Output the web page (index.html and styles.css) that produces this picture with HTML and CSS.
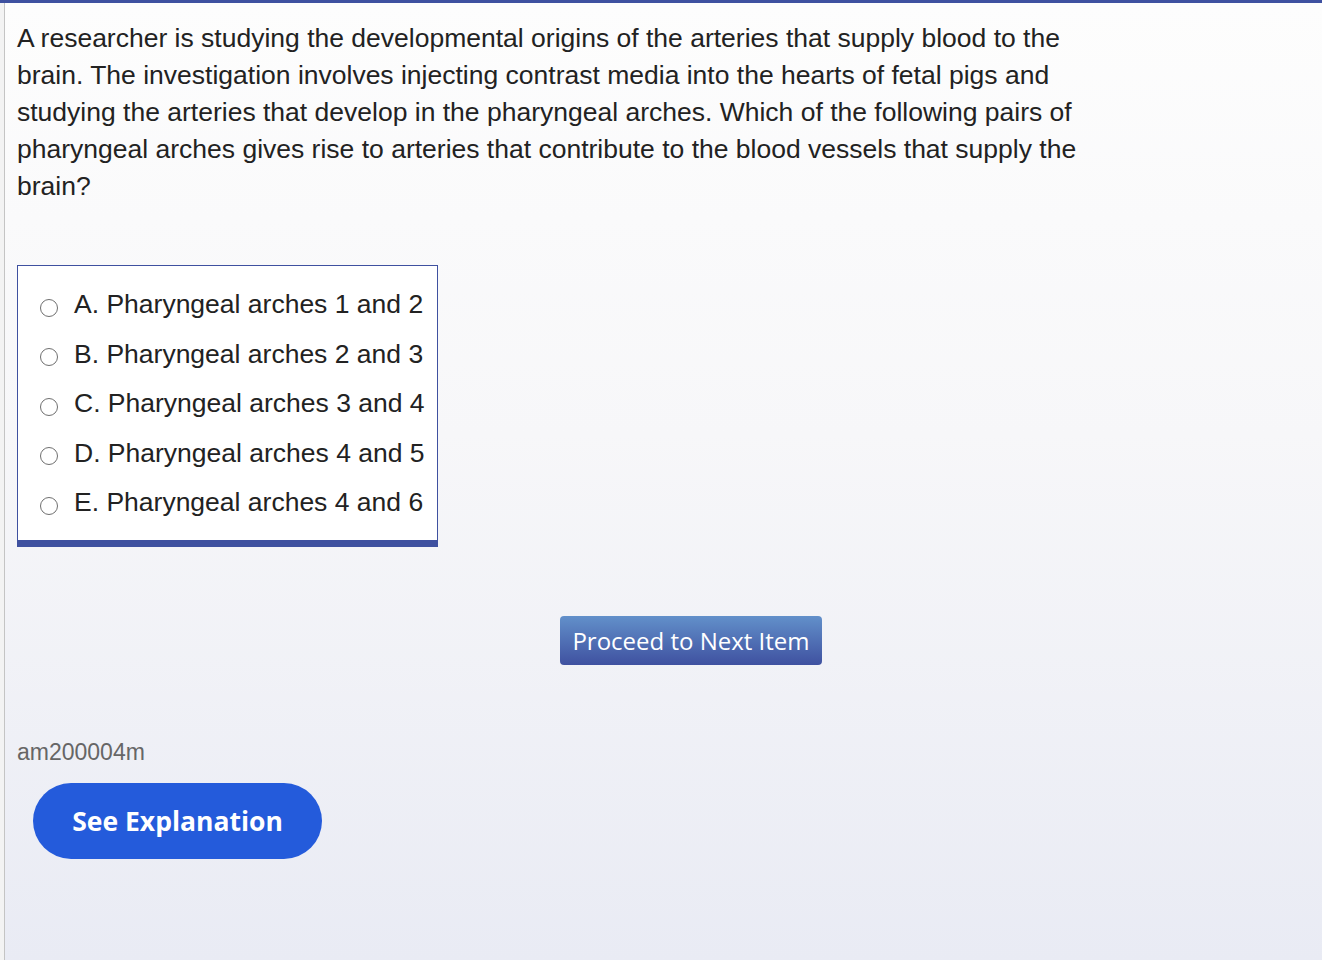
FILE: index.html
```html
<!DOCTYPE html>
<html>
<head>
<meta charset="utf-8">
<link rel="stylesheet" href="styles.css">
</head>
<body>
<div class="topbar"></div>
<div class="page">
  <div class="question">A researcher is studying the developmental origins of the arteries that supply blood to the brain. The investigation involves injecting contrast media into the hearts of fetal pigs and studying the arteries that develop in the pharyngeal arches. Which of the following pairs of pharyngeal arches gives rise to arteries that contribute to the blood vessels that supply the brain?</div>
  <div class="choices">
    <label class="choice"><span class="radio"></span><span class="ctext">A. Pharyngeal arches 1 and 2</span></label>
    <label class="choice"><span class="radio"></span><span class="ctext">B. Pharyngeal arches 2 and 3</span></label>
    <label class="choice"><span class="radio"></span><span class="ctext">C. Pharyngeal arches 3 and 4</span></label>
    <label class="choice"><span class="radio"></span><span class="ctext">D. Pharyngeal arches 4 and 5</span></label>
    <label class="choice"><span class="radio"></span><span class="ctext">E. Pharyngeal arches 4 and 6</span></label>
  </div>
  <div class="proceed-row">
    <button class="proceed">Proceed to Next Item</button>
  </div>
  <div class="item-id">am200004m</div>
  <button class="explain">See Explanation</button>
</div>
</body>
</html>
```
FILE: styles.css
```css
html, body {
  margin: 0;
  padding: 0;
  height: 100%;
}
body {
  background: #f3f3f3;
  font-family: "Liberation Sans", Arial, sans-serif;
  overflow: hidden;
}
.topbar {
  height: 3px;
  background: #3f51a0;
}
.page {
  margin-left: 4px;
  border-left: 1px solid #c4c4c4;
  height: 957px;
  box-sizing: border-box;
  background: linear-gradient(to bottom, #fdfdfd 0%, #f7f7f9 45%, #e9ebf4 100%);
  padding: 17px 12px 0 12px;
}
.question {
  width: 1080px;
  font-size: 26.5px;
  line-height: 37px;
  color: #222;
}
.choices {
  margin-top: 60px;
  width: 421px;
  box-sizing: border-box;
  background: #fff;
  border: 1px solid #3f51a0;
  border-bottom: 7px solid #3f51a0;
  padding: 14px 0 12px 22px;
}
.choice {
  display: flex;
  align-items: center;
  height: 49.5px;
  font-size: 26.5px;
  color: #222;
}
.radio {
  width: 16px;
  height: 16px;
  border: 1.5px solid #6f6f6f;
  border-radius: 50%;
  margin-top: 6px;
  margin-right: 16px;
  flex: none;
}
.proceed-row {
  display: flex;
  padding-left: 543px;
  margin-top: 69px;
}
.proceed {
  width: 262px;
  height: 49px;
  border: none;
  border-radius: 4px;
  background: linear-gradient(to bottom, #6290ca 0%, #3f51a0 100%);
  color: #fff;
  font-family: "Open Sans", sans-serif;
  font-size: 24px;
  padding: 0;
}
.item-id {
  margin-top: 75px;
  font-size: 23px;
  color: #666;
  line-height: 24px;
}
.explain {
  display: block;
  margin-top: 19px;
  margin-left: 16px;
  width: 289px;
  height: 76px;
  border: none;
  border-radius: 38px;
  background: #245bdb;
  color: #fff;
  font-family: "Open Sans", sans-serif;
  font-weight: 700;
  font-size: 26.5px;
  padding: 0;
}
```
